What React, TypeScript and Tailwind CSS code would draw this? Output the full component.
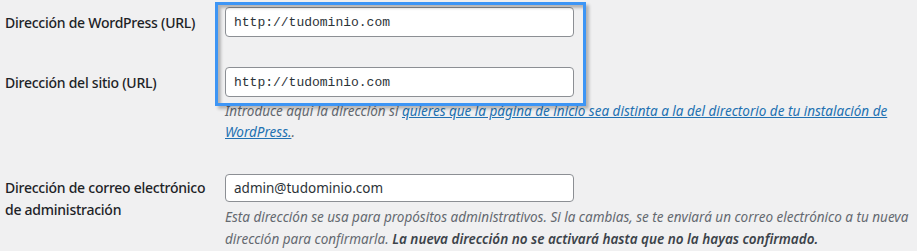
import React from "react";

const sans = { fontFamily: '"Noto Sans", "Open Sans", Arial, sans-serif' };

export default function App() {
  return (
    <div
      className="w-[917px] h-[251px] bg-[#f0f0f1] text-[#1d2327] overflow-hidden relative"
      style={sans}
    >
      <div className="grid grid-cols-[220px_1fr] pl-[5px] pt-[7px]">
        {/* Row 1 */}
        <div className="text-[14px] font-medium h-[30px] flex items-center tracking-[-0.25px]">
          Dirección de WordPress (URL)
        </div>
        <div>
          <input
            readOnly
            value="http://tudominio.com"
            className="w-[349px] h-[30px] bg-white border border-[#8c8f94] rounded-[4px] px-[8px] text-[13px] text-[#2c3338] outline-none"
            style={{ fontFamily: '"Liberation Mono", monospace' }}
          />
        </div>

        {/* Row 2 */}
        <div className="text-[14px] font-medium h-[30px] flex items-center mt-[30px] tracking-[-0.25px]">
          Dirección del sitio (URL)
        </div>
        <div className="mt-[30px]">
          <input
            readOnly
            value="http://tudominio.com"
            className="w-[349px] h-[30px] bg-white border border-[#8c8f94] rounded-[4px] px-[8px] text-[13px] text-[#2c3338] outline-none"
            style={{ fontFamily: '"Liberation Mono", monospace' }}
          />
          <p className="mt-[4px] max-w-[688px] text-[13.5px] italic text-[#646970] leading-[21px]">
            Introduce aquí la dirección si{" "}
            <span className="text-[#2271b1] underline">
              quieres que la página de inicio sea distinta a la del directorio de tu instalación de WordPress.
            </span>
            .
          </p>
        </div>

        {/* Row 3 */}
        <div className="text-[14px] font-medium leading-[22px] mt-[31px] pt-[3px] tracking-[-0.25px]">
          Dirección de correo electrónico
          <br />
          de administración
        </div>
        <div className="mt-[31px]">
          <input
            readOnly
            value="admin@tudominio.com"
            className="w-[349px] h-[28px] bg-white border border-[#8c8f94] rounded-[4px] px-[8px] text-[13.5px] text-[#2c3338] outline-none"
            style={sans}
          />
          <p className="mt-[4px] max-w-[688px] text-[13.5px] italic text-[#646970] leading-[22px]">
            Esta dirección se usa para propósitos administrativos. Si la cambias, se te enviará un correo electrónico a tu nueva dirección para confirmarla.{" "}
            <strong className="font-semibold text-[#3c434a]">
              La nueva dirección no se activará hasta que no la hayas confirmado.
            </strong>
          </p>
        </div>
      </div>

      {/* Highlight annotation */}
      <div className="absolute left-[215px] top-[2px] w-[371px] h-[104px] border-[3px] border-[#3d95f5] shadow-[3px_3px_3px_rgba(0,0,0,0.25),inset_3px_3px_3px_rgba(0,0,0,0.25)] pointer-events-none" />
    </div>
  );
}
